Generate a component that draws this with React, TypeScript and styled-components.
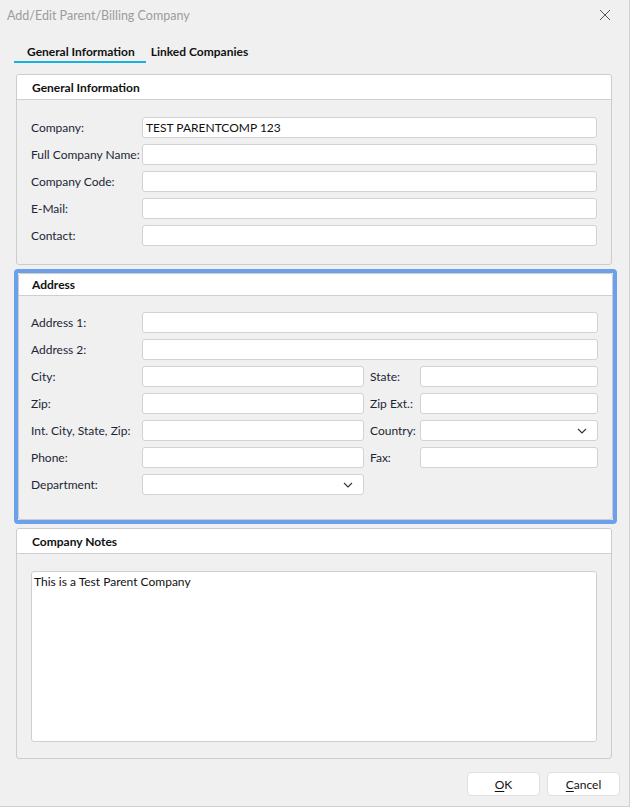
import React from "react";
import styled, { createGlobalStyle } from "styled-components";

const Global = createGlobalStyle`
  html, body { margin: 0; padding: 0; background: #f0f0f0; }
  body { font-family: Lato, "Noto Sans", sans-serif; font-size: 12px; color: #1a2433; }
  * { box-sizing: border-box; }
`;

const Window = styled.div`
  width: 630px;
  height: 807px;
  background: #f0f0f0;
  border-right: 1px solid #cfcfcf;
  border-bottom: 1px solid #cfcfcf;
  display: flex;
  flex-direction: column;
`;

const TitleBar = styled.div`
  height: 30px;
  display: flex;
  align-items: center;
  justify-content: space-between;
  padding: 0 18px 0 7px;
`;

const Title = styled.div`
  color: #9c9c9c;
  font-size: 12.5px;
`;

const CloseBtn = styled.div`
  width: 12px;
  height: 12px;
  display: flex;
`;

const TabBar = styled.div`
  display: flex;
  align-items: flex-end;
  padding: 0 0 0 14px;
  height: 33px;
`;

const Tab = styled.div<{ $active?: boolean; $pl: number; $pr: number }>`
  font-weight: 700;
  font-size: 12px;
  color: #111;
  padding: 0 ${(p) => p.$pr}px 2px ${(p) => p.$pl}px;
  border-bottom: 2px solid ${(p) => (p.$active ? "#17b2dd" : "transparent")};
  line-height: 14px;
`;

const Content = styled.div`
  padding: 11px 17px 0 16px;
  display: flex;
  flex-direction: column;
  gap: 4px;
`;

const Panel = styled.div`
  border: 1px solid #cccccc;
  border-radius: 3px;
  background: #f0f0f0;
  overflow: hidden;
`;

const Focus = styled.div`
  margin: 0 -5px 0 -2px;
  border: 4px solid #6ba0ec;
  border-radius: 4px;
`;

const PanelHeader = styled.div<{ $h: number; $pl: number }>`
  height: ${(p) => p.$h}px;
  background: #fff;
  border-bottom: 1px solid #cfcfcf;
  padding-left: ${(p) => p.$pl}px;
  display: flex;
  align-items: center;
  font-weight: 700;
  font-size: 12px;
  color: #111;
`;

const Form = styled.div<{ $cols: string; $pt: number; $pb: number; $pl: number }>`
  display: grid;
  grid-template-columns: ${(p) => p.$cols};
  row-gap: 6px;
  padding: ${(p) => p.$pt}px 14px ${(p) => p.$pb}px ${(p) => p.$pl}px;
  align-items: center;
`;

const Label = styled.label<{ $indent?: boolean }>`
  font-size: 12px;
  color: #1c2636;
  padding-left: ${(p) => (p.$indent ? 6 : 0)}px;
  white-space: nowrap;
`;

const Input = styled.div<{ $span?: number }>`
  grid-column: span ${(p) => p.$span || 1};
  height: 21px;
  background: #fff;
  border: 1px solid #d2d2d2;
  border-radius: 3px;
  display: flex;
  align-items: center;
  justify-content: space-between;
  padding: 0 10px 0 3px;
  font-size: 12px;
  color: #111;
`;

const Empty = styled.div``;

const NotesBody = styled.div`
  padding: 17px 14px 16px 14px;
`;

const TextArea = styled.div`
  height: 171px;
  background: #fff;
  border: 1px solid #cfcfcf;
  border-radius: 3px;
  padding: 2px 2px;
  font-size: 12px;
  color: #111;
`;

const Footer = styled.div`
  display: flex;
  justify-content: flex-end;
  gap: 7px;
  padding: 13px 9px 0 0;
`;

const Button = styled.div`
  width: 73px;
  height: 24px;
  background: #fff;
  border: 1px solid #e0e0e0;
  border-radius: 4px;
  display: flex;
  align-items: center;
  justify-content: center;
  font-size: 12px;
  color: #111;
  u { text-decoration: underline; text-underline-offset: 2px; }
`;

const Chevron = () => (
  <svg width="10" height="6" viewBox="0 0 10 6">
    <path d="M1 1 L5 5 L9 1" fill="none" stroke="#333" strokeWidth="1.1" />
  </svg>
);

export default function App() {
  return (
    <>
      <Global />
      <Window>
        <TitleBar>
          <Title>Add/Edit Parent/Billing Company</Title>
          <CloseBtn>
            <svg width="12" height="12" viewBox="0 0 12 12">
              <path d="M1 1 L11 11 M11 1 L1 11" stroke="#555" strokeWidth="1" />
            </svg>
          </CloseBtn>
        </TitleBar>
        <TabBar>
          <Tab $active $pl={13} $pr={11}>General Information</Tab>
          <Tab $pl={5} $pr={5}>Linked Companies</Tab>
        </TabBar>
        <Content>
          <Panel>
            <PanelHeader $h={25} $pl={15}>General Information</PanelHeader>
            <Form $cols="111px 1fr" $pt={17} $pb={18} $pl={14}>
              <Label>Company:</Label>
              <Input>TEST PARENTCOMP 123</Input>
              <Label>Full Company Name:</Label>
              <Input />
              <Label>Company Code:</Label>
              <Input />
              <Label>E-Mail:</Label>
              <Input />
              <Label>Contact:</Label>
              <Input />
            </Form>
          </Panel>
          <Focus>
            <Panel>
              <PanelHeader $h={22} $pl={13}>Address</PanelHeader>
              <Form $cols="111px 222px 56px 1fr" $pt={16} $pb={24} $pl={12}>
                <Label>Address 1:</Label>
                <Input $span={3} />
                <Label>Address 2:</Label>
                <Input $span={3} />
                <Label>City:</Label>
                <Input />
                <Label $indent>State:</Label>
                <Input />
                <Label>Zip:</Label>
                <Input />
                <Label $indent>Zip Ext.:</Label>
                <Input />
                <Label>Int. City, State, Zip:</Label>
                <Input />
                <Label $indent>Country:</Label>
                <Input>
                  <span />
                  <Chevron />
                </Input>
                <Label>Phone:</Label>
                <Input />
                <Label $indent>Fax:</Label>
                <Input />
                <Label>Department:</Label>
                <Input>
                  <span />
                  <Chevron />
                </Input>
                <Empty />
                <Empty />
              </Form>
            </Panel>
          </Focus>
          <Panel>
            <PanelHeader $h={25} $pl={15}>Company Notes</PanelHeader>
            <NotesBody>
              <TextArea>This is a Test Parent Company</TextArea>
            </NotesBody>
          </Panel>
        </Content>
        <Footer>
          <Button>
            <span><u>O</u>K</span>
          </Button>
          <Button>
            <span><u>C</u>ancel</span>
          </Button>
        </Footer>
      </Window>
    </>
  );
}
